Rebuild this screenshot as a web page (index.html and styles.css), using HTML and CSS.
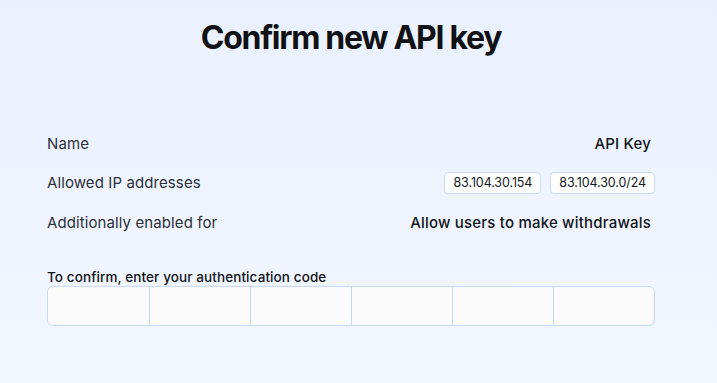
FILE: index.html
```html
<!DOCTYPE html>
<html>
<head>
<meta charset="utf-8">
<link rel="stylesheet" href="styles.css">
</head>
<body>
<main class="page">
  <h1 class="title">Confirm new API key</h1>
  <dl class="details">
    <div class="row">
      <dt class="label">Name</dt>
      <dd class="value">API Key</dd>
    </div>
    <div class="row">
      <dt class="label">Allowed IP addresses</dt>
      <dd class="value chips">
        <span class="chip">83.104.30.154</span>
        <span class="chip">83.104.30.0/24</span>
      </dd>
    </div>
    <div class="row">
      <dt class="label">Additionally enabled for</dt>
      <dd class="value">Allow users to make withdrawals</dd>
    </div>
  </dl>
  <div class="confirm">
    <label class="confirm-label">To confirm, enter your authentication code</label>
    <div class="code">
      <input class="cell" maxlength="1">
      <input class="cell" maxlength="1">
      <input class="cell" maxlength="1">
      <input class="cell" maxlength="1">
      <input class="cell" maxlength="1">
      <input class="cell" maxlength="1">
    </div>
  </div>
</main>
</body>
</html>
```
FILE: styles.css
```css
html, body {
  margin: 0;
  height: 100%;
}
body {
  background: linear-gradient(180deg, #eaf1fe 0%, #eff4fe 60%, #f1f6ff 100%);
  font-family: Inter, "Noto Sans", sans-serif;
  color: #14161a;
}
.page {
  width: 608px;
  margin: 0 auto 0 47px;
  padding-top: 18px;
}
.title {
  margin: 0;
  text-align: center;
  font-size: 32px;
  line-height: 40px;
  font-weight: 700;
  letter-spacing: -1.3px;
  color: #0f1114;
}
.details {
  margin: 74px 0 0;
  display: flex;
  flex-direction: column;
  gap: 17.5px;
}
.row {
  display: flex;
  justify-content: space-between;
  align-items: center;
  height: 22px;
}
.label {
  font-size: 15px;
  color: #2c3038;
  letter-spacing: 0.1px;
}
.value {
  margin: 0;
  padding-right: 4px;
  font-size: 15px;
  font-weight: 500;
  letter-spacing: 0.2px;
  color: #111318;
}
.chips {
  display: flex;
  gap: 9px;
  padding-right: 0;
}
.chip {
  display: inline-flex;
  align-items: center;
  height: 22px;
  box-sizing: border-box;
  padding: 0 8px;
  border: 1px solid #c9dbf6;
  border-radius: 4px;
  background: #ffffff;
  font-size: 12.5px;
  font-weight: 400;
  letter-spacing: -0.1px;
  color: #16181c;
}
.confirm {
  margin-top: 35px;
  display: flex;
  flex-direction: column;
  gap: 0;
}
.confirm-label {
  font-size: 13.5px;
  font-weight: 500;
  letter-spacing: 0.1px;
  color: #111318;
  line-height: 18px;
}
.code {
  display: grid;
  grid-template-columns: repeat(6, 1fr);
  height: 40px;
  box-sizing: border-box;
  border: 1px solid #c6daf7;
  border-radius: 6px;
  background: #fbfbfc;
  overflow: hidden;
}
.cell {
  min-width: 0;
  border: 0;
  border-left: 1px solid #c6daf7;
  background: transparent;
  margin: 0;
  padding: 0;
  font: inherit;
  text-align: center;
  outline: none;
}
.cell:first-child {
  border-left: 0;
}
```
